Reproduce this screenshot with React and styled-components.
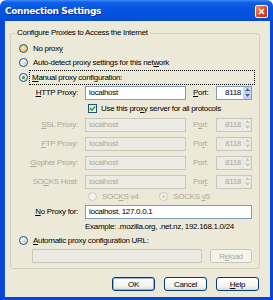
import React from "react";
import styled, { createGlobalStyle } from "styled-components";

const Global = createGlobalStyle`
  html, body { margin: 0; padding: 0; background: #fff; }
  * { box-sizing: border-box; }
`;

const Window = styled.div`
  width: 273px;
  height: 300px;
  display: flex;
  flex-direction: column;
  font-family: "Liberation Sans", Arial, sans-serif;
  font-size: 8px;
  letter-spacing: -0.3px;
  color: #000;
`;

const TitleBar = styled.div`
  height: 21px;
  flex-shrink: 0;
  display: flex;
  align-items: center;
  justify-content: space-between;
  padding: 0 5px 0 5px;
  border-radius: 6px 6px 0 0;
  background: linear-gradient(#3C8CF6 0%, #0F5FE8 12%, #0553E1 45%, #0453E0 80%, #0349CE 100%);
`;

const Title = styled.span`
  font-family: "DejaVu Sans", sans-serif;
  font-weight: bold;
  font-size: 9px;
  letter-spacing: -0.35px;
  color: #fff;
  text-shadow: 1px 1px 0 #0A2A8E;
`;

const CloseButton = styled.span`
  width: 13px;
  height: 13px;
  border: 1px solid #fff;
  border-radius: 2px;
  background: linear-gradient(135deg, #F0906E, #D6441F 60%, #C33A16);
  display: flex;
  align-items: center;
  justify-content: center;
  margin-top: 1px;
`;

const Frame = styled.div`
  flex: 1;
  display: flex;
  flex-direction: column;
  background: #ECE9D8;
  border-left: 4px solid #0846D8;
  border-right: 3px solid #0846D8;
  border-bottom: 3px solid #0846D8;
  box-shadow: inset 1px 0 0 #0A55E0;
  padding: 7px 0 0 6px;
`;

const Group = styled.fieldset`
  margin: 0 10px 0 0;
  border: 1px solid #D0D0BF;
  border-radius: 3px;
  padding: 0 4px 5px 8px;
  display: flex;
  flex-direction: column;
`;

const Legend = styled.legend`
  padding: 0 2px;
  margin-left: -4px;
  line-height: 10px;
`;

const OptionRow = styled.div`
  display: flex;
  align-items: center;
  height: 14.5px;
  gap: ${p => p.$gap || 4}px;
  margin-top: ${p => p.$top || 0}px;
`;

const OptionText = styled.span`
  color: ${p => (p.$disabled ? "#ACA899" : "#000")};
  line-height: 11px;
  padding: 1px 2px;
  margin-left: -2px;
  border: 1px dotted ${p => (p.$focus ? "#000" : "transparent")};
  flex: ${p => (p.$focus ? 1 : "none")};
`;

const Radio = styled.span`
  width: 9px;
  height: 9px;
  flex-shrink: 0;
  margin-left: ${p => p.$offset || 0}px;
  border-radius: 50%;
  border: 1px solid ${p => (p.$disabled ? "#CAC8BB" : "#1C5180")};
  background: ${p =>
    p.$disabled ? "#F4F3EE" : "radial-gradient(circle at 65% 65%, #D4D2C8, #FFFFFF 75%)"};
  box-shadow: ${p => (p.$hover ? "inset 0 0 0 1.5px #F7C453" : "none")};
  display: flex;
  align-items: center;
  justify-content: center;

  &::after {
    content: "";
    width: 3px;
    height: 3px;
    border-radius: 50%;
    background: ${p => (p.$disabled ? "#CAC8BB" : "#2FA12F")};
    display: ${p => (p.$checked ? "block" : "none")};
  }
`;

const ProxyGrid = styled.div`
  display: grid;
  grid-template-columns: 59px 101px 16px 36px;
  column-gap: 7px;
  row-gap: 5px;
  align-items: center;
  margin-top: 1px;
`;

const Label = styled.span`
  text-align: ${p => p.$align || "right"};
  color: ${p => (p.$disabled ? "#ACA899" : "#000")};
  white-space: nowrap;
`;

const Input = styled.input`
  height: 14px;
  width: 100%;
  margin: 0;
  padding: 0 3px;
  font: inherit;
  letter-spacing: inherit;
  grid-column: ${p => (p.$wide ? "2 / 5" : "auto")};
  border: 1px solid ${p => (p.disabled ? "#C9C7BA" : "#7F9DB9")};
  background: ${p => (p.disabled ? "#EBEBE4" : "#fff")};
  color: ${p => (p.disabled ? "#ACA899" : "#000")};
  outline: none;
`;

const Spin = styled.div`
  height: 14px;
  display: flex;
  align-items: stretch;
  border: 1px solid ${p => (p.$disabled ? "#C9C7BA" : "#7F9DB9")};
  background: ${p => (p.$disabled ? "#EBEBE4" : "#fff")};
  color: ${p => (p.$disabled ? "#ACA899" : "#000")};
`;

const SpinValue = styled.span`
  flex: 1;
  text-align: right;
  padding-right: 2px;
  line-height: 12px;
`;

const SpinButtons = styled.div`
  width: 8px;
  display: flex;
  flex-direction: column;
`;

const SpinButton = styled.span`
  flex: 1;
  display: flex;
  align-items: center;
  justify-content: center;
  border-radius: 1px;
  background: ${p =>
    p.$disabled ? "#F3F2EC" : "linear-gradient(#DCE6FD, #B6CBF8)"};
  border: 1px solid ${p => (p.$disabled ? "#E6E4DA" : "#B9CDF8")};
`;

const Arrow = ({ up, disabled }) => (
  <svg width="5" height="3" viewBox="0 0 5 3">
    <path
      d={up ? "M0 3 L2.5 0 L5 3 Z" : "M0 0 L2.5 3 L5 0 Z"}
      fill={disabled ? "#C9C7BA" : "#4D6185"}
    />
  </svg>
);

const PortField = ({ disabled }) => (
  <Spin $disabled={disabled}>
    <SpinValue>8118</SpinValue>
    <SpinButtons>
      <SpinButton $disabled={disabled}>
        <Arrow up disabled={disabled} />
      </SpinButton>
      <SpinButton $disabled={disabled}>
        <Arrow disabled={disabled} />
      </SpinButton>
    </SpinButtons>
  </Spin>
);

const CheckCell = styled.div`
  grid-column: 2 / 5;
  display: flex;
  align-items: center;
  gap: ${p => p.$gap || 4}px;
  height: 12px;
  padding-left: 3px;
  margin: ${p => p.$margin || "0"};
`;

const Checkbox = styled.span`
  width: 9px;
  height: 9px;
  flex-shrink: 0;
  border: 1px solid #1C5180;
  background: linear-gradient(135deg, #DCDBD2, #fff);
  display: flex;
  align-items: center;
  justify-content: center;
`;

const Note = styled.span`
  grid-column: 2 / 5;
  height: 12px;
  line-height: 12px;
  margin: -3px 0 -2px;
`;

const UrlRow = styled.div`
  display: flex;
  gap: 8px;
  margin: 1px 3px 0 13px;
`;

const Button = styled.button`
  width: ${p => p.$width || 43}px;
  height: 14px;
  flex-shrink: 0;
  margin: 0;
  padding: 0;
  font: inherit;
  letter-spacing: inherit;
  border-radius: 3px;
  border: 1px solid ${p => (p.disabled ? "#C9C7BA" : "#003C74")};
  color: ${p => (p.disabled ? "#ACA899" : "#000")};
  background: ${p =>
    p.disabled ? "#F5F4EA" : "linear-gradient(#FFFFFF, #F4F3EE 70%, #DCD9CC)"};
  box-shadow: ${p => (p.$default ? "inset 0 0 0 1px #97AEE8" : "none")};
`;

const Footer = styled.div`
  display: flex;
  justify-content: flex-end;
  gap: 9px;
  padding: 0 11px 0 0;
  margin-top: 8px;
`;

const K = styled.u`
  text-decoration: underline;
`;

const proxies = [
  { label: <><K>S</K>SL Proxy:</>, port: <>P<K>o</K>rt:</> },
  { label: <><K>F</K>TP Proxy:</>, port: <>Po<K>r</K>t:</> },
  { label: <><K>G</K>opher Proxy:</>, port: <>Port:</> },
  { label: <>SO<K>C</K>KS Host:</>, port: <>Por<K>t</K>:</> },
];

export default function App() {
  return (
    <>
      <Global />
      <Window>
        <TitleBar>
          <Title>Connection Settings</Title>
          <CloseButton>
            <svg width="7" height="7" viewBox="0 0 7 7">
              <path d="M1 1 L6 6 M6 1 L1 6" stroke="#fff" strokeWidth="1.6" />
            </svg>
          </CloseButton>
        </TitleBar>
        <Frame>
          <Group>
            <Legend>Configure Proxies to Access the Internet</Legend>
            <OptionRow $top={3}>
              <Radio $hover />
              <OptionText>No prox<K>y</K></OptionText>
            </OptionRow>
            <OptionRow>
              <Radio />
              <OptionText>Auto-detect proxy settings for this net<K>w</K>ork</OptionText>
            </OptionRow>
            <OptionRow $gap={3}>
              <Radio $checked />
              <OptionText $focus><K>M</K>anual proxy configuration:</OptionText>
            </OptionRow>
            <ProxyGrid>
              <Label><K>H</K>TTP Proxy:</Label>
              <Input readOnly value="localhost" />
              <Label $align="left"><K>P</K>ort:</Label>
              <PortField />
              <CheckCell $margin="-2px 0">
                <Checkbox>
                  <svg width="7" height="7" viewBox="0 0 7 7">
                    <path d="M0.8 3.2 L2.8 5.2 L6.2 1.6" stroke="#21A121" strokeWidth="1.5" fill="none" />
                  </svg>
                </Checkbox>
                <span>Use this pro<K>x</K>y server for all protocols</span>
              </CheckCell>
              {proxies.map((p, i) => (
                <React.Fragment key={i}>
                  <Label $disabled>{p.label}</Label>
                  <Input readOnly disabled value="localhost" />
                  <Label $align="left" $disabled>{p.port}</Label>
                  <PortField disabled />
                </React.Fragment>
              ))}
              <CheckCell $gap={4} $margin="-3px 0 -3px">
                <Radio $disabled />
                <OptionText $disabled>SOC<K>K</K>S v4</OptionText>
                <Radio $disabled $checked $offset={14} />
                <OptionText $disabled>SOCKS <K>v</K>5</OptionText>
              </CheckCell>
              <Label><K>N</K>o Proxy for:</Label>
              <Input readOnly $wide value="localhost, 127.0.0.1" />
              <Note>Example: .mozilla.org, .net.nz, 192.168.1.0/24</Note>
            </ProxyGrid>
            <OptionRow $top={3}>
              <Radio />
              <OptionText><K>A</K>utomatic proxy configuration URL:</OptionText>
            </OptionRow>
            <UrlRow>
              <Input readOnly disabled value="" />
              <Button disabled $width={42}>
                R<K>e</K>load
              </Button>
            </UrlRow>
          </Group>
          <Footer>
            <Button $default>OK</Button>
            <Button>Cancel</Button>
            <Button><K>H</K>elp</Button>
          </Footer>
        </Frame>
      </Window>
    </>
  );
}
